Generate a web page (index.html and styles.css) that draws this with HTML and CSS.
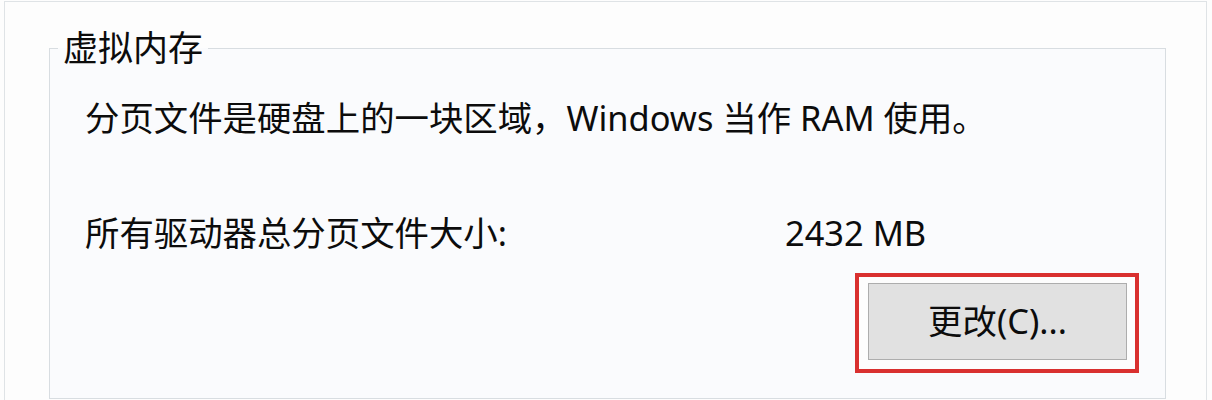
FILE: index.html
```html
<!DOCTYPE html>
<html lang="zh-CN">
<head>
<meta charset="utf-8">
<title>虚拟内存</title>
<link rel="stylesheet" href="styles.css">
</head>
<body>
<div class="frame">
  <fieldset class="group">
    <legend class="group-title">虚拟内存</legend>
    <p class="desc">分页文件是硬盘上的一块区域，Windows 当作 RAM 使用。</p>
    <div class="size-row">
      <span class="size-label">所有驱动器总分页文件大小:</span>
      <span class="size-value">2432 MB</span>
    </div>
    <div class="actions">
      <div class="highlight">
        <button class="btn" type="button">更改(C)...</button>
      </div>
    </div>
  </fieldset>
</div>
</body>
</html>
```

FILE: styles.css
```css
html, body {
  margin: 0;
  padding: 0;
  background: #fdfdfd;
  overflow: hidden;
}

body {
  font-family: "Noto Sans", "Noto Sans CJK SC", sans-serif;
  font-size: 34.4px;
  color: #0c0c0c;
}

.frame {
  margin: 1px 0 0 4px;
  width: 1203px;
  box-sizing: border-box;
  height: 399px;
  overflow: hidden;
  border: 1px solid #dfe3e6;
  border-bottom: none;
  background: #fdfdfd;
}

.group {
  margin: 26px 40px 0 44px;
  padding: 0 0 25px 0;
  border: 1px solid #d8dde1;
  background: #fafbfd;
  min-width: 0;
}

.group-title {
  margin-left: 8px;
  padding: 0 5px;
  font-size: 35px;
  line-height: 40px;
}

.desc {
  margin: 30px 0 0 35px;
  line-height: 40px;
  white-space: nowrap;
}

.size-row {
  margin: 75px 0 0 35px;
  display: grid;
  grid-template-columns: 700px auto;
  line-height: 40px;
  white-space: nowrap;
}

.actions {
  margin-top: 20px;
  display: flex;
  justify-content: flex-end;
  padding-right: 26px;
}

.highlight {
  border: 4px solid #d9302f;
  padding: 6px 8px 9px 9px;
  background: #fdfdfd;
}

.btn {
  display: block;
  width: 259px;
  height: 77px;
  margin: 0;
  padding: 0;
  border: 1px solid #adadad;
  background: #e1e1e1;
  font-family: "Noto Sans", "Noto Sans CJK SC", sans-serif;
  font-size: 34.4px;
  color: #0c0c0c;
  line-height: 1;
}
```
